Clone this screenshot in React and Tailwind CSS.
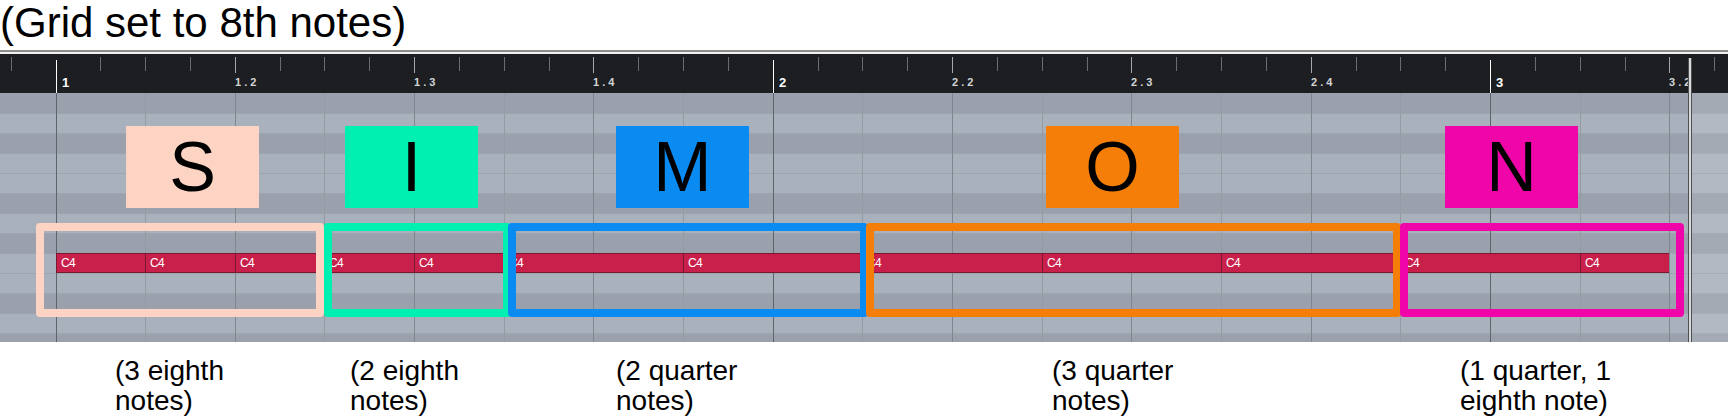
import React from 'react'

// piano roll geometry (px)
const ORIGIN = 55.5
const SIX = 44.83
const EIGHTH = SIX * 2
const px = (n) => Math.round(n)

// 1 = black key (darker row), top row is G#4, C4 is row 8
const ROWS = [1, 0, 1, 0, 0, 1, 0, 1, 0, 0, 1, 0, 1]

const GROUPS = [
  { letter: 'S', color: '#fdd4c4', box: 126, outline: [36, 324], notes: [1, 1, 1] },
  { letter: 'I', color: '#00f0b2', box: 345, outline: [324, 511], notes: [1, 1] },
  { letter: 'M', color: '#0a8bf2', box: 616, outline: [508, 868], notes: [2, 2] },
  { letter: 'O', color: '#f47e08', box: 1046, outline: [866, 1401], notes: [2, 2, 2] },
  { letter: 'N', color: '#f006a8', box: 1445, outline: [1400, 1684], notes: [2, 1] },
]

const CAPTIONS = [
  { w: 'w-[235px]', lines: ['(3 eighth', 'notes)'] },
  { w: 'w-[266px]', lines: ['(2 eighth', 'notes)'] },
  { w: 'w-[436px]', lines: ['(2 quarter', 'notes)'] },
  { w: 'w-[408px]', lines: ['(3 quarter', 'notes)'] },
  { w: 'w-[260px]', lines: ['(1 quarter, 1', 'eighth note)'] },
]

function Ruler() {
  const items = []
  for (let i = -1; i <= 37; i++) {
    const x = px(ORIGIN + i * SIX)
    if (i % 16 === 0) {
      items.push(<div key={'t' + i} className="absolute top-[6px] bottom-0 w-px bg-white" style={{ left: x }} />)
      items.push(
        <span key={'l' + i} className="absolute top-[22px] text-[13px] font-bold leading-none text-white" style={{ left: x + 6 }}>
          {i / 16 + 1}
        </span>
      )
    } else if (i % 4 === 0 && i > 0) {
      const bar = Math.floor(i / 16) + 1
      const beat = (i % 16) / 4 + 1
      items.push(<div key={'t' + i} className="absolute top-[3px] h-[16px] w-px bg-[#a3a6ab]" style={{ left: x }} />)
      items.push(
        <span key={'l' + i} className="absolute top-[23px] text-[11px] font-bold leading-none tracking-[3px] text-[#d4d5d7]" style={{ left: x }}>
          {bar}.{beat}
        </span>
      )
    } else {
      items.push(<div key={'t' + i} className="absolute top-[3px] h-[14px] w-px bg-[#696c71]" style={{ left: x }} />)
    }
  }
  return <div className="relative h-[39px] overflow-hidden bg-[#1c1e21]">{items}</div>
}

function Grid() {
  const lines = []
  for (let j = 0; j <= 19; j++) {
    const x = px(ORIGIN + j * EIGHTH)
    const cls = j % 8 === 0 ? 'bg-[#5e646c]' : j % 2 === 0 ? 'bg-[#7f8690]' : 'bg-[#949ba5]'
    lines.push(<div key={j} className={`absolute top-0 bottom-0 w-px ${cls}`} style={{ left: x }} />)
  }

  const notes = []
  let pos = 0
  GROUPS.forEach((g) =>
    g.notes.forEach((len) => {
      const left = px(ORIGIN + pos * EIGHTH)
      const right = px(ORIGIN + (pos + len) * EIGHTH)
      notes.push(
        <div
          key={pos}
          className="absolute top-[160px] flex h-[20px] items-center border border-r-0 border-[#7a1830] bg-[#c9204b] pl-[4px] text-[12px] leading-none tracking-tighter text-white"
          style={{ left, width: right - left }}
        >
          C4
        </div>
      )
      pos += len
    })
  )

  return (
    <div className="relative h-[249px] overflow-hidden">
      <div className="flex h-full flex-col">
        {ROWS.map((dark, k) => (
          <div
            key={k}
            className={`h-[20px] shrink-0 border-t border-[#9da4ae] ${dark ? 'bg-[#9aa1ac]' : 'bg-[#a9b1bc]'}`}
          />
        ))}
      </div>
      {lines}
      {notes}

      {GROUPS.map((g) => (
        <div
          key={g.letter}
          className="absolute top-[33px] flex h-[82px] w-[133px] items-center justify-center text-[70px] leading-none text-black"
          style={{ left: g.box, backgroundColor: g.color }}
        >
          {g.letter}
        </div>
      ))}

      {GROUPS.map((g) => (
        <div
          key={'o' + g.letter}
          className="absolute top-[130px] h-[94px] rounded-[4px] border-[8px]"
          style={{ left: g.outline[0], width: g.outline[1] - g.outline[0], borderColor: g.color }}
        />
      ))}
    </div>
  )
}

export default function App() {
  return (
    <div className="h-[419px] w-[1728px] overflow-hidden bg-white font-['Liberation_Sans',Arial,sans-serif]">
      <div className="h-[50px] text-[42px] leading-[46px] text-black">(Grid set to 8th notes)</div>
      <div className="h-[2px] bg-[#8c8c8c]" />
      <div className="h-[2px] bg-[#f0f0f0]" />

      <div className="relative">
        <Ruler />
        <Grid />
        <div className="absolute top-[39px] bottom-0 left-[1692px] right-0 bg-white/10" />
        <div className="absolute top-[4px] bottom-0 left-[1688px] w-[4px] border-x border-[#4d4f53] bg-[#d9dadc]" />
      </div>

      <div className="flex pl-[115px] pt-[14px] text-[28px] leading-[30px] text-black">
        {CAPTIONS.map((c, i) => (
          <div key={i} className={`${c.w} shrink-0`}>
            {c.lines.map((l) => (
              <div key={l}>{l}</div>
            ))}
          </div>
        ))}
      </div>
    </div>
  )
}
